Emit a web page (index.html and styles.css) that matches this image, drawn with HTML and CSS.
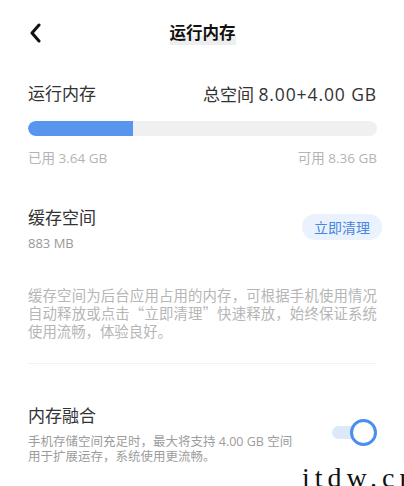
FILE: index.html
```html
<!DOCTYPE html>
<html>
<head>
    <meta charset="UTF-8">
    <meta name="viewport" content="width=device-width, initial-scale=1.0">
    <title>运行内存</title>
    <link rel="stylesheet" href="styles.css">
</head>
<body>
    <div class="page">
        <div class="topbar">
            <svg class="back" width="16" height="20" viewBox="0 0 16 20">
                <polyline points="11,2 4,10 11,18" fill="none" stroke="#111" stroke-width="3" stroke-linecap="round" stroke-linejoin="round"/>
            </svg>
            <span class="title">运行内存</span>
        </div>

        <div class="row-head">
            <span class="label">运行内存</span>
            <span class="label">总空间 <span class="total">8.00+4.00 GB</span></span>
        </div>
        <div class="bar"><div class="bar-fill" style="width: 30%"></div></div>
        <div class="row-foot">
            <span>已用 3.64 GB</span>
            <span>可用 8.36 GB</span>
        </div>

        <div class="cache">
            <div>
                <div class="label">缓存空间</div>
                <div class="size">883 MB</div>
            </div>
            <button class="clean">立即清理</button>
        </div>

        <p class="desc">缓存空间为后台应用占用的内存，可根据手机使用情况自动释放或点击“立即清理”快速释放，始终保证系统使用流畅，体验良好。</p>

        <div class="divider"></div>

        <div class="fusion">
            <div>
                <div class="label">内存融合</div>
                <div class="note">手机存储空间充足时，最大将支持 4.00 GB 空间<br>用于扩展运存，系统使用更流畅。</div>
            </div>
            <div class="toggle"><span class="knob"></span></div>
        </div>
    </div>
    <div class="watermark">itdw.cn</div>
</body>
</html>
```

FILE: styles.css
```css
html, body {
    margin: 0;
    padding: 0;
    background-color: #fff;
    height: 100%;
    overflow: hidden;
}

body {
    font-family: "Open Sans", "Noto Sans CJK SC", sans-serif;
    color: #333;
    position: relative;
}

.page {
    padding: 0 27px 0 28px;
}

.topbar {
    height: 66px;
    display: flex;
    align-items: center;
    justify-content: center;
    position: relative;
}

.back {
    position: absolute;
    left: 0;
    top: 23px;
}

.title {
    font-family: "Noto Sans CJK SC", sans-serif;
    font-size: 16.5px;
    font-weight: bold;
    color: #111;
    line-height: 22px;
    padding-bottom: 2px;
    background: linear-gradient(to bottom, transparent 62%, #eeeeee 62%);
}

.row-head {
    margin-top: 16px;
    display: flex;
    justify-content: space-between;
    white-space: nowrap;
}

.label {
    font-size: 17px;
    line-height: 24px;
    color: #333;
}

.total {
    font-size: 17.5px;
    letter-spacing: 0.9px;
}

.bar {
    margin-top: 14px;
    height: 15px;
    border-radius: 8px;
    background-color: #f0f0f0;
    overflow: hidden;
}

.bar-fill {
    height: 100%;
    background-color: #5895ef;
    border-radius: 8px 0 0 8px;
}

.row-foot {
    margin-top: 13px;
    display: flex;
    justify-content: space-between;
    font-size: 13.5px;
    line-height: 18px;
    color: #b4b4b4;
}

.cache {
    margin-top: 39px;
    display: flex;
    justify-content: space-between;
    align-items: center;
}

.size {
    margin-top: 4px;
    font-size: 13px;
    line-height: 18px;
    color: #999;
}

.clean {
    width: 80px;
    height: 26px;
    margin-top: -4px;
    margin-right: -5px;
    border: none;
    border-radius: 13px;
    background-color: #eaf2fd;
    color: #4a86de;
    font-family: "Noto Sans CJK SC", sans-serif;
    font-size: 14px;
    padding: 0;
}

.desc {
    margin: 34px 0 0;
    font-family: "Noto Sans CJK SC", sans-serif;
    font-size: 14.4px;
    line-height: 18px;
    color: #b6b6b6;
    text-align: justify;
}

.divider {
    margin-top: 23px;
    height: 1px;
    background-color: #f2f2f2;
}

.fusion {
    margin-top: 40px;
    display: flex;
    justify-content: space-between;
    align-items: center;
}

.note {
    margin-top: 6px;
    font-size: 12.5px;
    line-height: 15px;
    color: #9c9c9c;
}

.toggle {
    position: relative;
    width: 45px;
    height: 13px;
    border-radius: 7px;
    background-color: #dce9fb;
    margin-top: -4px;
}

.knob {
    position: absolute;
    right: 0;
    top: -7px;
    width: 21px;
    height: 21px;
    border: 3px solid #4a8ef0;
    border-radius: 50%;
    background-color: #fff;
}

.watermark {
    position: absolute;
    left: 302px;
    bottom: -8px;
    font-family: "Liberation Serif", serif;
    font-size: 28px;
    letter-spacing: 5px;
    color: #111;
    white-space: nowrap;
}
```
